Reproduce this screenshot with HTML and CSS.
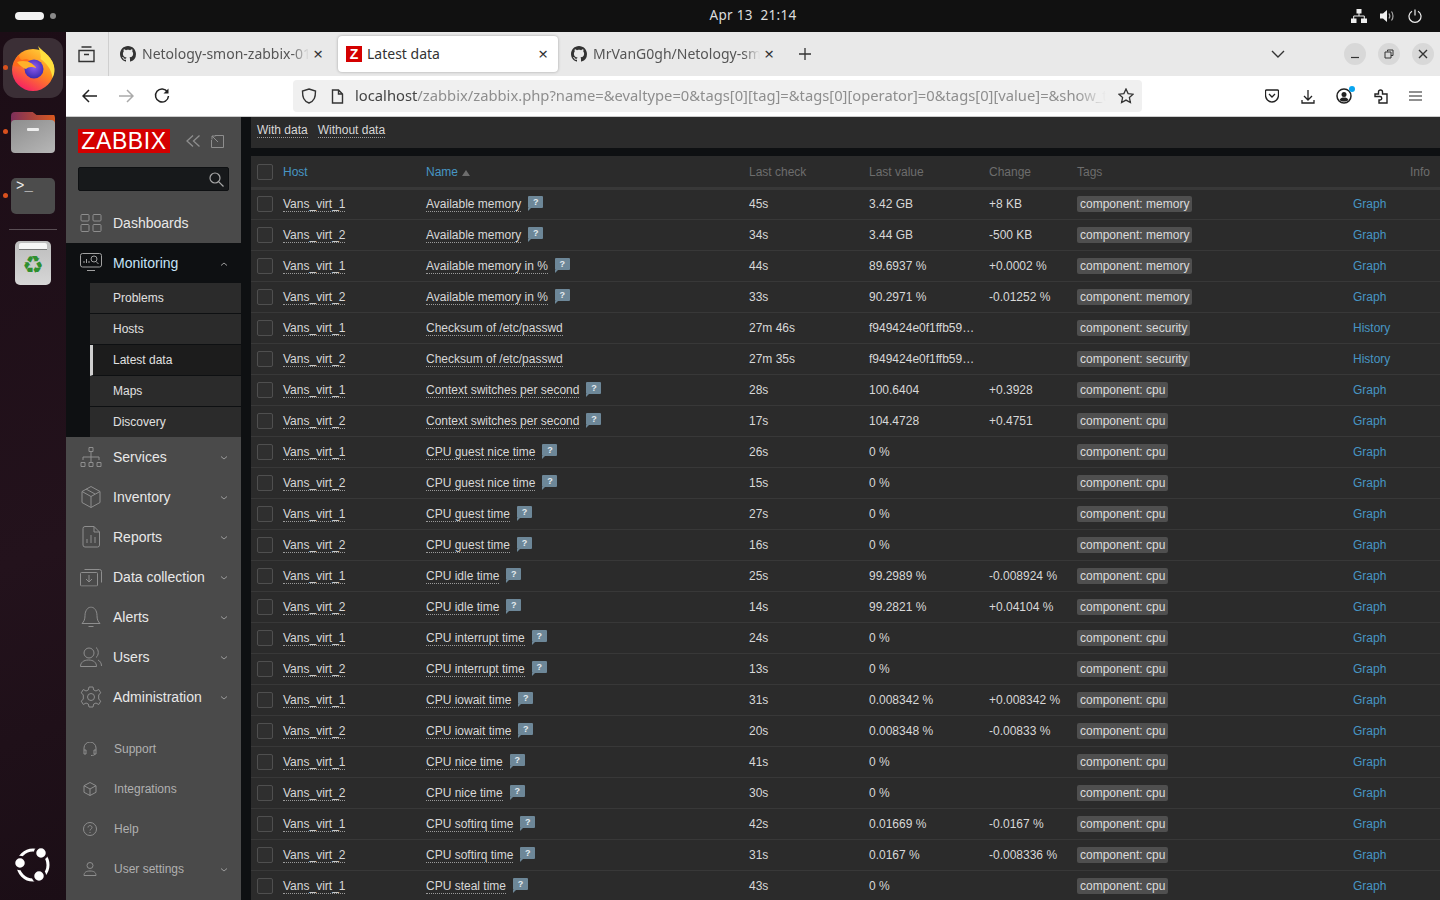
FILE: index.html
```html
<!DOCTYPE html>
<html lang="en">
<head>
  <meta charset="UTF-8">
  <title>Latest data</title>
  <link rel="stylesheet" href="styles.css">
</head>
<body>
  <svg class="defs" width="0" height="0">
    <symbol id="gh" viewBox="0 0 16 16"><path fill="currentColor" d="M8 0C3.58 0 0 3.58 0 8c0 3.54 2.29 6.53 5.47 7.59.4.07.55-.17.55-.38 0-.19-.01-.82-.01-1.49-2.01.37-2.53-.49-2.69-.94-.09-.23-.48-.94-.82-1.13-.28-.15-.68-.52-.01-.53.63-.01 1.08.58 1.23.82.72 1.21 1.87.87 2.33.66.07-.52.28-.87.51-1.07-1.78-.2-3.64-.89-3.64-3.95 0-.87.31-1.59.82-2.15-.08-.2-.36-1.02.08-2.12 0 0 .67-.21 2.2.82.64-.18 1.32-.27 2-.27s1.36.09 2 .27c1.53-1.04 2.2-.82 2.2-.82.44 1.1.16 1.92.08 2.12.51.56.82 1.27.82 2.15 0 3.07-1.87 3.75-3.65 3.95.29.25.54.73.54 1.48 0 1.07-.01 1.93-.01 2.2 0 .21.15.46.55.38A8.01 8.01 0 0 0 16 8c0-4.42-3.58-8-8-8z"/></symbol>
    <symbol id="down" viewBox="0 0 8 6"><path fill="none" stroke="currentColor" d="M1 1.500l3 2.500 3-2.500"/></symbol>
  </svg>

  <header class="topbar">
    <div class="workspaces"><span class="pill"></span><span class="wdot"></span></div>
    <div class="clock">Apr 13&nbsp;&nbsp;21:14</div>
    <div class="tray">
      <svg width="16" height="14" viewBox="0 0 16 14"><path fill="#eee" d="M5.500 0h5v4.500h-5zM0 9.500h5.500V14H0zM10 9.500h6V14h-6z"/><path fill="none" stroke="#eee" d="M8 4v3M2.700 10V7h10.600v3"/></svg>
      <svg width="15" height="14" viewBox="0 0 15 14"><path fill="#eee" d="M0 4.500h3L7 1v12L3 9.500H0z"/><path fill="none" stroke="#aaa" stroke-width="1.200" d="M9 4.500c1 1.500 1 3.500 0 5M11.500 2.500c2 2.500 2 6.500 0 9"/></svg>
      <svg width="14" height="14" viewBox="0 0 14 14"><path fill="none" stroke="#eee" stroke-width="1.200" d="M7 .5v6M4 2.200a6 6 0 1 0 6 0"/></svg>
    </div>
  </header>

  <div class="desktop">
    <nav class="dock">
      <div class="dock-item tile">
        <span class="run-dot"></span>
        <svg width="46" height="46" viewBox="0 0 46 46">
          <defs>
            <linearGradient id="fx" x1="0.800" y1="0" x2="0.200" y2="1"><stop offset="0" stop-color="#ffd43a"/><stop offset=".45" stop-color="#ff8a1e"/><stop offset="1" stop-color="#f5156c"/></linearGradient>
            <radialGradient id="fxb" cx=".5" cy=".4" r=".6"><stop offset="0" stop-color="#8f5cf0"/><stop offset="1" stop-color="#3a2ab0"/></radialGradient>
          </defs>
          <circle cx="23" cy="25" r="21" fill="url(#fx)"/>
          <path fill="#ffdf3e" d="M28 1c5 6 16 12 16.500 23 .2 3-.5 6-2 9-1-9-6-15-12-19 1-4-1-9-2.500-13z"/>
          <path fill="#ff6a1a" d="M3 21c1-5 3-8 6-11 0 3 1 4 3 5 3-1 6-1 9 1l-7 6c-4 0-8-1-11-1z"/>
          <circle cx="24" cy="24" r="9.500" fill="url(#fxb)"/>
          <path fill="#ffb12a" d="M7 17c5-2 11-1 14 1 3 2 6 5 5 5-5-2-8-1-10 1-3-1-7-4-9-7z"/>
        </svg>
      </div>
      <div class="dock-item">
        <span class="run-dot"></span>
        <div class="folder"><span class="folder-back"></span><span class="folder-front"><i></i></span></div>
      </div>
      <div class="dock-item">
        <span class="run-dot"></span>
        <div class="term">&gt;_</div>
      </div>
      <div class="dock-sep"></div>
      <div class="trash"><span class="trash-lid"></span><span class="recycle">♻</span></div>
      <svg class="ubuntu" width="36" height="36" viewBox="0 0 36 36">
        <circle cx="18" cy="18" r="15" fill="none" stroke="#fff" stroke-width="3"/>
        <circle cx="5" cy="16" r="6" fill="#fff" stroke="#1d0f18" stroke-width="2.500"/>
        <circle cx="26" cy="6" r="6" fill="#fff" stroke="#1d0f18" stroke-width="2.500"/>
        <circle cx="24" cy="29" r="6" fill="#fff" stroke="#1d0f18" stroke-width="2.500"/>
      </svg>
    </nav>

    <div class="window">
      <div class="tabstrip">
        <div class="views">
          <svg width="17" height="17" viewBox="0 0 17 17"><path fill="none" stroke="#333" stroke-width="1.400" d="M3.500 1h10M1 4.500h15v11H1zM6 8.500h5"/></svg>
        </div>
        <div class="tab">
          <svg class="fav" width="16" height="16"><use href="#gh"/></svg>
          <span class="tab-title">Netology-smon-zabbix-01</span>
          <span class="tab-x">×</span>
        </div>
        <div class="tab active">
          <span class="zfav">Z</span>
          <span class="tab-title">Latest data</span>
          <span class="tab-x">×</span>
        </div>
        <div class="tab">
          <svg class="fav" width="16" height="16"><use href="#gh"/></svg>
          <span class="tab-title">MrVanG0gh/Netology-sm</span>
          <span class="tab-x">×</span>
        </div>
        <svg class="newtab" width="12" height="12" viewBox="0 0 12 12"><path stroke="#333" stroke-width="1.300" d="M6 0v12M0 6h12"/></svg>
        <svg class="tablist" width="14" height="8" viewBox="0 0 14 8"><path fill="none" stroke="#333" stroke-width="1.400" d="M1 1l6 6 6-6"/></svg>
        <div class="winbtn"><svg width="10" height="10" viewBox="0 0 10 10"><path stroke="#333" stroke-width="1.200" d="M1 8.500h8"/></svg></div>
        <div class="winbtn"><svg width="10" height="10" viewBox="0 0 10 10"><path fill="none" stroke="#333" d="M3.500 2.500V1h5.500v5.500H7M1 3h6v6H1z"/></svg></div>
        <div class="winbtn"><svg width="10" height="10" viewBox="0 0 10 10"><path stroke="#333" stroke-width="1.400" d="M1 1l8 8M9 1l-8 8"/></svg></div>
      </div>

      <div class="toolbar">
        <svg class="tool" width="16" height="14" viewBox="0 0 16 14"><path fill="none" stroke="#222" stroke-width="1.500" d="M15 7H1.500M7 1L1 7l6 6"/></svg>
        <svg class="tool" width="16" height="14" viewBox="0 0 16 14"><path fill="none" stroke="#aaa" stroke-width="1.500" d="M1 7h13.500M9 1l6 6-6 6"/></svg>
        <svg class="tool" width="16" height="16" viewBox="0 0 16 16"><path fill="none" stroke="#222" stroke-width="1.500" d="M13.500 4A6.500 6.500 0 1 0 14.500 8"/><path fill="#222" d="M14.500 .5v5h-5z"/></svg>
        <div class="urlbar">
          <svg width="16" height="16" viewBox="0 0 16 16"><path fill="none" stroke="#333" stroke-width="1.400" d="M8 1l6.500 2c0 6-1 10-6.500 12C2.500 13 1.500 9 1.500 3z"/></svg>
          <svg width="13" height="15" viewBox="0 0 13 15"><path fill="none" stroke="#333" stroke-width="1.400" d="M1.500 1h6l4 4v9h-10zM7.500 1v4h4"/></svg>
          <div class="url"><span class="host">localhost</span>/zabbix/zabbix.php?name=&amp;evaltype=0&amp;tags[0][tag]=&amp;tags[0][operator]=0&amp;tags[0][value]=&amp;show_t</div>
          <svg width="16" height="16" viewBox="0 0 16 16"><path fill="none" stroke="#333" stroke-width="1.300" d="M8 1l2.100 4.600 5 .6-3.700 3.400 1 5L8 12.100 3.600 14.600l1-5L.9 6.200l5-.6z"/></svg>
        </div>
        <div class="tools-right">
          <svg width="14" height="14" viewBox="0 0 14 14"><path fill="none" stroke="#222" stroke-width="1.300" d="M1.500 1h11c.5 0 1 .4 1 1v4c0 4-3 7-6.500 7S.5 10 .5 6V2c0-.6.5-1 1-1zM4 5l3 3 3-3"/></svg>
          <svg width="14" height="15" viewBox="0 0 14 15"><path fill="none" stroke="#222" stroke-width="1.300" d="M7 1v9.500M3 7l4 4 4-4M1 11v3h12v-3"/></svg>
          <div class="account">
            <svg width="16" height="16" viewBox="0 0 16 16"><circle cx="8" cy="8" r="7" fill="none" stroke="#222" stroke-width="1.500"/><circle cx="8" cy="6.500" r="2.500" fill="#222"/><path fill="#222" d="M3.500 12c1-2 2.500-2.500 4.500-2.500s3.500.5 4.500 2.500c-2.500 2-6.500 2-9 0z"/></svg>
            <span class="badge"></span>
          </div>
          <svg width="14" height="15" viewBox="0 0 14 15"><path fill="none" stroke="#222" stroke-width="1.400" d="M1 5h3.500V3a2 2 0 0 1 4 0v2H13v9H5v-3h1a1.700 1.700 0 0 0 0-3.500H1z"/></svg>
          <svg width="13" height="10" viewBox="0 0 13 10"><path stroke="#222" stroke-width="1.200" d="M0 1h13M0 5h13M0 9h13"/></svg>
        </div>
      </div>

      <div class="page">
        <aside class="sidebar">
          <div class="brand">
            <div class="logo">ZABBIX</div>
            <svg width="14" height="12" viewBox="0 0 14 12"><path fill="none" stroke="#8e8e8e" stroke-width="1.300" d="M7 .5L1 6l6 5.500M13.500 .5L7.500 6l6 5.500"/></svg>
            <svg width="13" height="13" viewBox="0 0 13 13"><path fill="none" stroke="#8e8e8e" d="M4 .5h8.500v12H.5V5M1 1l6 6M1 4.500V1h3.500"/></svg>
          </div>
          <div class="search">
            <svg width="15" height="15" viewBox="0 0 15 15"><circle cx="6" cy="6" r="5" fill="none" stroke="#a8a8a8" stroke-width="1.200"/><path stroke="#a8a8a8" stroke-width="1.200" d="M9.800 9.800L14.500 14.500"/></svg>
          </div>
          <a class="menu">
            <svg class="mi" width="22" height="20" viewBox="0 0 22 20"><path fill="none" stroke="#8e8e8e" d="M2 1.500h6a1 1 0 0 1 1 1v4.500a1 1 0 0 1-1 1H2a1 1 0 0 1-1-1V2.500a1 1 0 0 1 1-1zM14 1.500h6a1 1 0 0 1 1 1v4.500a1 1 0 0 1-1 1h-6a1 1 0 0 1-1-1V2.500a1 1 0 0 1 1-1zM2 11.500h6a1 1 0 0 1 1 1v5a1 1 0 0 1-1 1H2a1 1 0 0 1-1-1v-5a1 1 0 0 1 1-1zM14 11.500h6a1 1 0 0 1 1 1v5a1 1 0 0 1-1 1h-6a1 1 0 0 1-1-1v-5a1 1 0 0 1 1-1z"/></svg>
            <span>Dashboards</span>
          </a>
          <a class="menu open">
            <svg class="mi" width="22" height="20" viewBox="0 0 22 20"><path fill="none" stroke="#a0a0a0" d="M2.500 .5h17a2 2 0 0 1 2 2V12a2 2 0 0 1-2 2h-17a2 2 0 0 1-2-2V2.500a2 2 0 0 1 2-2zM7 17.500h8M4 10V8M6.500 10V6M9 10V8"/><circle cx="14" cy="6" r="3" fill="none" stroke="#a0a0a0"/><path stroke="#a0a0a0" d="M16 8.500l2.500 2.500"/></svg>
            <span>Monitoring</span>
            <svg class="chev up" width="8" height="6"><use href="#down"/></svg>
          </a>
          <div class="submenu">
            <a>Problems</a>
            <a>Hosts</a>
            <a class="current">Latest data</a>
            <a>Maps</a>
            <a>Discovery</a>
          </div>
          <a class="menu">
            <svg class="mi" width="22" height="20" viewBox="0 0 22 20"><path fill="none" stroke="#8e8e8e" d="M9 .5h4v4H9zM1 15.500h4v4H1zM9 15.500h4v4H9zM17 15.500h4v4h-4zM11 4.500V15M3 13v-3h16v3"/></svg>
            <span>Services</span>
            <svg class="chev" width="8" height="6"><use href="#down"/></svg>
          </a>
          <a class="menu">
            <svg class="mi" width="20" height="22" viewBox="0 0 20 22"><path fill="none" stroke="#8e8e8e" d="M10 .5l9 5v11l-9 5-9-5v-11zM1 5.500l9 5 9-5M10 10.500v11M5 3l9 5"/></svg>
            <span>Inventory</span>
            <svg class="chev" width="8" height="6"><use href="#down"/></svg>
          </a>
          <a class="menu">
            <svg class="mi" width="18" height="22" viewBox="0 0 18 22"><path fill="none" stroke="#8e8e8e" d="M3 .5h9l5.500 5.500V19a2 2 0 0 1-2 2H3a2 2 0 0 1-2-2V2.500a2 2 0 0 1 2-2zM12 .5V6h5.500M5 17v-4M9 17V9M13 17v-6"/></svg>
            <span>Reports</span>
            <svg class="chev" width="8" height="6"><use href="#down"/></svg>
          </a>
          <a class="menu">
            <svg class="mi" width="22" height="19" viewBox="0 0 22 19"><path fill="none" stroke="#8e8e8e" d="M1.500 5h15a1 1 0 0 1 1 1v11.500a1 1 0 0 1-1 1h-15a1 1 0 0 1-1-1V6a1 1 0 0 1 1-1zM4.500 2h15a2 2 0 0 1 2 2v11M9 7.500v7M6 11.500l3 3 3-3"/></svg>
            <span>Data collection</span>
            <svg class="chev" width="8" height="6"><use href="#down"/></svg>
          </a>
          <a class="menu">
            <svg class="mi" width="20" height="21" viewBox="0 0 20 21"><path fill="none" stroke="#8e8e8e" d="M1 17h18c-2-2-3-4-3-8 0-5-3-8.500-6-8.500S4 4 4 9c0 4-1 6-3 8zM7.500 20h5"/></svg>
            <span>Alerts</span>
            <svg class="chev" width="8" height="6"><use href="#down"/></svg>
          </a>
          <a class="menu">
            <svg class="mi" width="22" height="20" viewBox="0 0 22 20"><circle cx="9" cy="6" r="5" fill="none" stroke="#8e8e8e"/><path fill="none" stroke="#8e8e8e" d="M.5 19.500c0-4 3-6.500 8-6.500s8 2.500 8 6.500zM16 .5c3 2 3 8 0 10M18 13c2 1 3.500 3 3.500 6"/></svg>
            <span>Users</span>
            <svg class="chev" width="8" height="6"><use href="#down"/></svg>
          </a>
          <a class="menu">
            <svg class="mi" width="22" height="22" viewBox="0 0 22 22"><circle cx="11" cy="11" r="3.500" fill="none" stroke="#8e8e8e"/><path fill="none" stroke="#8e8e8e" d="M9 1h4l.7 3 2.300 1 2.700-1.500 2 3.300-2 2.200v4l2 2.200-2 3.300L16 17l-2.300 1-.7 3H9l-.7-3L6 17l-2.700 1.500-2-3.300 2-2.200v-4l-2-2.200 2-3.300L6 5l2.300-1z"/></svg>
            <span>Administration</span>
            <svg class="chev" width="8" height="6"><use href="#down"/></svg>
          </a>
          <div class="user-menu">
            <a class="menu small">
              <svg class="mi" width="14" height="14" viewBox="0 0 14 14"><path fill="none" stroke="#8e8e8e" d="M1 8V6a6 6 0 0 1 12 0v2M1 8h2v4H1zM13 8h-2v4h2zM12 12c0 1-2 1.500-4 1.500"/></svg>
              <span>Support</span>
            </a>
            <a class="menu small">
              <svg class="mi" width="14" height="14" viewBox="0 0 14 14"><path fill="none" stroke="#8e8e8e" d="M7 .5l6 3.200v6.600l-6 3.200-6-3.200V3.700zM1 3.700l6 3.300 6-3.300M7 7v6.500"/></svg>
              <span>Integrations</span>
            </a>
            <a class="menu small">
              <svg class="mi" width="14" height="14" viewBox="0 0 14 14"><circle cx="7" cy="7" r="6.500" fill="none" stroke="#8e8e8e"/><path fill="none" stroke="#8e8e8e" d="M5 5.500C5 3 9 3 9 5.500 9 7 7 7 7 8.500M7 10v1"/></svg>
              <span>Help</span>
            </a>
            <a class="menu small">
              <svg class="mi" width="14" height="14" viewBox="0 0 14 14"><circle cx="7" cy="3.500" r="3" fill="none" stroke="#8e8e8e"/><path fill="none" stroke="#8e8e8e" d="M1 13.500c0-3 2-4.500 6-4.500s6 1.500 6 4.500z"/></svg>
              <span>User settings</span>
              <svg class="chev" width="8" height="6"><use href="#down"/></svg>
            </a>
          </div>
        </aside>

        <main class="content">
          <div class="filter-tabs"><a>With data</a><a>Without data</a></div>
          <table class="latest">
            <colgroup>
              <col class="c-check"><col class="c-host"><col class="c-name"><col class="c-time"><col class="c-value"><col class="c-change"><col class="c-tags"><col class="c-graph"><col class="c-info">
            </colgroup>
            <thead>
              <tr><th><span class="cb"></span></th><th class="sortable">Host</th><th class="sortable">Name <i class="sort-up"></i></th><th>Last check</th><th>Last value</th><th>Change</th><th>Tags</th><th></th><th class="info">Info</th></tr>
            </thead>
            <tbody>
              <tr><td><span class="cb"></span></td><td><a class="host-link">Vans_virt_1</a></td><td><a class="item">Available memory</a><span class="hint">?</span></td><td>45s</td><td>3.42 GB</td><td>+8 KB</td><td><span class="tag">component: memory</span></td><td><a class="act">Graph</a></td><td></td></tr>
              <tr><td><span class="cb"></span></td><td><a class="host-link">Vans_virt_2</a></td><td><a class="item">Available memory</a><span class="hint">?</span></td><td>34s</td><td>3.44 GB</td><td>-500 KB</td><td><span class="tag">component: memory</span></td><td><a class="act">Graph</a></td><td></td></tr>
              <tr><td><span class="cb"></span></td><td><a class="host-link">Vans_virt_1</a></td><td><a class="item">Available memory in %</a><span class="hint">?</span></td><td>44s</td><td>89.6937 %</td><td>+0.0002 %</td><td><span class="tag">component: memory</span></td><td><a class="act">Graph</a></td><td></td></tr>
              <tr><td><span class="cb"></span></td><td><a class="host-link">Vans_virt_2</a></td><td><a class="item">Available memory in %</a><span class="hint">?</span></td><td>33s</td><td>90.2971 %</td><td>-0.01252 %</td><td><span class="tag">component: memory</span></td><td><a class="act">Graph</a></td><td></td></tr>
              <tr><td><span class="cb"></span></td><td><a class="host-link">Vans_virt_1</a></td><td><a class="item">Checksum of /etc/passwd</a></td><td>27m 46s</td><td>f949424e0f1ffb59…</td><td></td><td><span class="tag">component: security</span></td><td><a class="act">History</a></td><td></td></tr>
              <tr><td><span class="cb"></span></td><td><a class="host-link">Vans_virt_2</a></td><td><a class="item">Checksum of /etc/passwd</a></td><td>27m 35s</td><td>f949424e0f1ffb59…</td><td></td><td><span class="tag">component: security</span></td><td><a class="act">History</a></td><td></td></tr>
              <tr><td><span class="cb"></span></td><td><a class="host-link">Vans_virt_1</a></td><td><a class="item">Context switches per second</a><span class="hint">?</span></td><td>28s</td><td>100.6404</td><td>+0.3928</td><td><span class="tag">component: cpu</span></td><td><a class="act">Graph</a></td><td></td></tr>
              <tr><td><span class="cb"></span></td><td><a class="host-link">Vans_virt_2</a></td><td><a class="item">Context switches per second</a><span class="hint">?</span></td><td>17s</td><td>104.4728</td><td>+0.4751</td><td><span class="tag">component: cpu</span></td><td><a class="act">Graph</a></td><td></td></tr>
              <tr><td><span class="cb"></span></td><td><a class="host-link">Vans_virt_1</a></td><td><a class="item">CPU guest nice time</a><span class="hint">?</span></td><td>26s</td><td>0 %</td><td></td><td><span class="tag">component: cpu</span></td><td><a class="act">Graph</a></td><td></td></tr>
              <tr><td><span class="cb"></span></td><td><a class="host-link">Vans_virt_2</a></td><td><a class="item">CPU guest nice time</a><span class="hint">?</span></td><td>15s</td><td>0 %</td><td></td><td><span class="tag">component: cpu</span></td><td><a class="act">Graph</a></td><td></td></tr>
              <tr><td><span class="cb"></span></td><td><a class="host-link">Vans_virt_1</a></td><td><a class="item">CPU guest time</a><span class="hint">?</span></td><td>27s</td><td>0 %</td><td></td><td><span class="tag">component: cpu</span></td><td><a class="act">Graph</a></td><td></td></tr>
              <tr><td><span class="cb"></span></td><td><a class="host-link">Vans_virt_2</a></td><td><a class="item">CPU guest time</a><span class="hint">?</span></td><td>16s</td><td>0 %</td><td></td><td><span class="tag">component: cpu</span></td><td><a class="act">Graph</a></td><td></td></tr>
              <tr><td><span class="cb"></span></td><td><a class="host-link">Vans_virt_1</a></td><td><a class="item">CPU idle time</a><span class="hint">?</span></td><td>25s</td><td>99.2989 %</td><td>-0.008924 %</td><td><span class="tag">component: cpu</span></td><td><a class="act">Graph</a></td><td></td></tr>
              <tr><td><span class="cb"></span></td><td><a class="host-link">Vans_virt_2</a></td><td><a class="item">CPU idle time</a><span class="hint">?</span></td><td>14s</td><td>99.2821 %</td><td>+0.04104 %</td><td><span class="tag">component: cpu</span></td><td><a class="act">Graph</a></td><td></td></tr>
              <tr><td><span class="cb"></span></td><td><a class="host-link">Vans_virt_1</a></td><td><a class="item">CPU interrupt time</a><span class="hint">?</span></td><td>24s</td><td>0 %</td><td></td><td><span class="tag">component: cpu</span></td><td><a class="act">Graph</a></td><td></td></tr>
              <tr><td><span class="cb"></span></td><td><a class="host-link">Vans_virt_2</a></td><td><a class="item">CPU interrupt time</a><span class="hint">?</span></td><td>13s</td><td>0 %</td><td></td><td><span class="tag">component: cpu</span></td><td><a class="act">Graph</a></td><td></td></tr>
              <tr><td><span class="cb"></span></td><td><a class="host-link">Vans_virt_1</a></td><td><a class="item">CPU iowait time</a><span class="hint">?</span></td><td>31s</td><td>0.008342 %</td><td>+0.008342 %</td><td><span class="tag">component: cpu</span></td><td><a class="act">Graph</a></td><td></td></tr>
              <tr><td><span class="cb"></span></td><td><a class="host-link">Vans_virt_2</a></td><td><a class="item">CPU iowait time</a><span class="hint">?</span></td><td>20s</td><td>0.008348 %</td><td>-0.00833 %</td><td><span class="tag">component: cpu</span></td><td><a class="act">Graph</a></td><td></td></tr>
              <tr><td><span class="cb"></span></td><td><a class="host-link">Vans_virt_1</a></td><td><a class="item">CPU nice time</a><span class="hint">?</span></td><td>41s</td><td>0 %</td><td></td><td><span class="tag">component: cpu</span></td><td><a class="act">Graph</a></td><td></td></tr>
              <tr><td><span class="cb"></span></td><td><a class="host-link">Vans_virt_2</a></td><td><a class="item">CPU nice time</a><span class="hint">?</span></td><td>30s</td><td>0 %</td><td></td><td><span class="tag">component: cpu</span></td><td><a class="act">Graph</a></td><td></td></tr>
              <tr><td><span class="cb"></span></td><td><a class="host-link">Vans_virt_1</a></td><td><a class="item">CPU softirq time</a><span class="hint">?</span></td><td>42s</td><td>0.01669 %</td><td>-0.0167 %</td><td><span class="tag">component: cpu</span></td><td><a class="act">Graph</a></td><td></td></tr>
              <tr><td><span class="cb"></span></td><td><a class="host-link">Vans_virt_2</a></td><td><a class="item">CPU softirq time</a><span class="hint">?</span></td><td>31s</td><td>0.0167 %</td><td>-0.008336 %</td><td><span class="tag">component: cpu</span></td><td><a class="act">Graph</a></td><td></td></tr>
              <tr><td><span class="cb"></span></td><td><a class="host-link">Vans_virt_1</a></td><td><a class="item">CPU steal time</a><span class="hint">?</span></td><td>43s</td><td>0 %</td><td></td><td><span class="tag">component: cpu</span></td><td><a class="act">Graph</a></td><td></td></tr>
            </tbody>
          </table>
        </main>
      </div>
    </div>
  </div>
</body>
</html>
```

FILE: styles.css
```css
* {
  box-sizing: border-box;
}

html, body {
  margin: 0;
  height: 100%;
  overflow: hidden;
}

body {
  display: flex;
  flex-direction: column;
  font-family: "Liberation Sans", Arial, sans-serif;
  background-color: #111;
}

.defs {
  position: absolute;
}

/* gnome top bar */
.topbar {
  height: 32px;
  flex: none;
  display: grid;
  grid-template-columns: 1fr auto 1fr;
  align-items: center;
  padding-bottom: 2px;
  background-color: #111;
  color: #ddd;
}

.workspaces {
  display: flex;
  align-items: center;
  gap: 6px;
  padding: 2px 0 0 15px;
}

.pill {
  width: 29px;
  height: 8px;
  border-radius: 4px;
  background-color: #f2f2f2;
}

.wdot {
  width: 6px;
  height: 6px;
  border-radius: 50%;
  background-color: #8a8a8a;
}

.clock {
  font-family: "Noto Sans", sans-serif;
  font-size: 13.5px;
  letter-spacing: 0.3px;
  transform: translateX(33px);
}

.tray {
  display: flex;
  justify-content: flex-end;
  align-items: center;
  gap: 13px;
  padding: 2px 18px 0 0;
}

.desktop {
  flex: 1;
  display: flex;
  min-height: 0;
}

/* ubuntu dock */
.dock {
  width: 66px;
  flex: none;
  display: flex;
  flex-direction: column;
  align-items: center;
  padding-top: 6px;
  background: linear-gradient(160deg, #1c0d16 0%, #23121c 60%, #1b0e16 100%);
}

.dock-item {
  position: relative;
  width: 60px;
  height: 60px;
  display: flex;
  align-items: center;
  justify-content: center;
  margin-bottom: 4px;
}

.tile {
  background-color: #3b2f36;
  border-radius: 13px;
}

.run-dot {
  position: absolute;
  left: 0;
  top: 27px;
  width: 5px;
  height: 5px;
  border-radius: 50%;
  background-color: #d9511e;
}

.folder {
  position: relative;
  width: 44px;
  height: 41px;
}

.folder-back {
  position: absolute;
  inset: 0 0 12px 0;
  border-radius: 4px 6px 0 0;
  background: linear-gradient(90deg, #7c2f5a, #d9591f);
  clip-path: polygon(0 0, 48% 0, 58% 12%, 100% 12%, 100% 100%, 0 100%);
}

.folder-front {
  position: absolute;
  inset: 8px 0 0 0;
  display: flex;
  justify-content: center;
  border-radius: 4px;
  background: linear-gradient(150deg, #8d8d8d, #b7b7b7);
}

.folder-front i {
  width: 12px;
  height: 3px;
  margin-top: 8px;
  border-radius: 1px;
  background-color: #eee;
}

.term {
  width: 44px;
  height: 36px;
  padding: 0 0 0 5px;
  border-radius: 5px;
  background-color: #4c4c4c;
  color: #f0f0f0;
  font-family: "Liberation Mono", monospace;
  font-size: 14px;
  line-height: 17px;
}

.dock-sep {
  width: 48px;
  height: 1px;
  flex: none;
  margin: -1px 0 11px;
  background-color: #5a4f55;
}

.trash {
  width: 36px;
  height: 44px;
  display: flex;
  flex-direction: column;
  align-items: center;
  padding-top: 2px;
  border-radius: 5px;
  background: linear-gradient(180deg, #bdbdbd, #d6d6d6);
}

.trash-lid {
  width: 28px;
  height: 7px;
  border-radius: 2px 2px 0 0;
  background-color: #f6f6f6;
  border-bottom: 1px solid #777;
}

.recycle {
  font-family: "DejaVu Sans", sans-serif;
  font-size: 24px;
  line-height: 30px;
  color: #2f8f2f;
}

.ubuntu {
  margin-top: auto;
  margin-bottom: 17px;
}

/* firefox chrome */
.window {
  flex: 1;
  min-width: 0;
  display: flex;
  flex-direction: column;
}

.tabstrip {
  height: 44px;
  flex: none;
  display: flex;
  align-items: center;
  background-color: #e9e9e9;
  font-family: "Noto Sans", sans-serif;
  font-size: 14px;
  color: #555;
}

.views {
  width: 43px;
  height: 100%;
  flex: none;
  display: flex;
  align-items: center;
  padding-left: 12px;
  border-right: 1px solid #cfcfcf;
}

.tab {
  width: 213px;
  height: 36px;
  flex: none;
  display: flex;
  align-items: center;
  margin-left: 3px;
  padding: 0 0 0 8px;
}

.tab.active {
  width: 220px;
  margin-left: 13px;
  margin-right: 2px;
  padding-right: 8px;
  background-color: #fff;
  border-radius: 4px;
  box-shadow: 0 0 3px rgba(0, 0, 0, 0.3);
  color: #333;
}

.fav {
  flex: none;
  color: #333;
}

.zfav {
  width: 16px;
  height: 16px;
  flex: none;
  background-color: #d40000;
  color: #fff;
  font-family: "Liberation Sans", sans-serif;
  font-weight: bold;
  font-size: 14px;
  line-height: 16px;
  text-align: center;
}

.tab-title {
  flex: 1;
  min-width: 0;
  margin: -2px 0 0 6px;
  white-space: nowrap;
  -webkit-mask-image: linear-gradient(90deg, #000 90%, transparent);
  mask-image: linear-gradient(90deg, #000 90%, transparent);
}

.tab.active .tab-title {
  margin-left: 5px;
  -webkit-mask-image: none;
  mask-image: none;
}

.tab-x {
  flex: none;
  margin-left: 2px;
  width: 14px;
  text-align: center;
  font-size: 17px;
  line-height: 16px;
  color: #333;
}

.newtab {
  flex: none;
  margin-left: 23px;
}

.tablist {
  flex: none;
  margin-left: auto;
  margin-right: 59px;
}

.winbtn {
  width: 22px;
  height: 22px;
  flex: none;
  display: flex;
  align-items: center;
  justify-content: center;
  margin-right: 12px;
  border-radius: 50%;
  background-color: #d8d8d8;
}

.winbtn:last-child {
  margin-right: 6px;
}

.toolbar {
  height: 41px;
  flex: none;
  display: flex;
  align-items: center;
  padding-left: 16px;
  background-color: #fff;
  border-bottom: 1px solid #ccc;
}

.tool {
  flex: none;
  margin-right: 20px;
}

.urlbar {
  width: 849px;
  height: 32px;
  flex: none;
  display: flex;
  align-items: center;
  gap: 12px;
  margin-left: 103px;
  padding: 0 8px;
  border-radius: 4px;
  background-color: #f0f0f0;
}

.urlbar svg {
  flex: none;
}

.urlbar svg:nth-child(2) {
  margin: 0 -1px 0 2px;
}

.url {
  flex: 1;
  min-width: 0;
  margin-top: -2px;
  font-family: "Noto Sans", sans-serif;
  font-size: 14.75px;
  color: #8e8e8e;
  white-space: nowrap;
  -webkit-mask-image: linear-gradient(90deg, #000 96%, transparent);
  mask-image: linear-gradient(90deg, #000 96%, transparent);
}

.url .host {
  color: #444;
}

.tools-right {
  flex: 1;
  display: flex;
  align-items: center;
  justify-content: space-between;
  padding: 0 18px 0 123px;
}

.account {
  position: relative;
  display: flex;
}

.badge {
  position: absolute;
  top: -2px;
  right: -3px;
  width: 6px;
  height: 6px;
  border-radius: 50%;
  background-color: #0aa5ef;
}

/* zabbix */
.page {
  flex: 1;
  min-height: 0;
  display: flex;
  background-color: #0e1012;
}

.sidebar {
  width: 175px;
  flex: none;
  display: flex;
  flex-direction: column;
  background-color: #4a4a4a;
  color: #f2f2f2;
}

.brand {
  display: flex;
  align-items: center;
  height: 24px;
  margin: 12px 0 0 12px;
}

.logo {
  width: 92px;
  height: 24px;
  margin-right: 16px;
  background-color: #d40000;
  color: #fff;
  font-size: 23px;
  line-height: 24px;
  text-align: center;
  letter-spacing: 0.6px;
}

.brand svg:last-child {
  margin-left: 11px;
}

.search {
  display: flex;
  align-items: center;
  justify-content: flex-end;
  width: 151px;
  height: 24px;
  margin: 14px 0 12px 12px;
  padding-right: 4px;
  background-color: #17191b;
  border: 1px solid #0e1012;
  border-radius: 2px;
}

.menu {
  position: relative;
  height: 40px;
  flex: none;
  display: flex;
  align-items: center;
  padding-left: 47px;
  font-size: 14px;
  color: #e8e8e8;
}

.menu .mi {
  position: absolute;
  left: 25px;
  top: 50%;
  transform: translate(-50%, -50%);
}

.menu.open {
  background-color: #0e1012;
  color: #c5e3f8;
}

.chev {
  position: absolute;
  right: 13px;
  top: 18px;
  color: #9a9a9a;
}

.chev.up {
  transform: rotate(180deg);
}

.submenu {
  display: flex;
  flex-direction: column;
  padding-left: 24px;
  background-color: #0e1012;
}

.submenu a {
  height: 31px;
  display: flex;
  align-items: center;
  padding-left: 23px;
  font-size: 12px;
  color: #e0e0e0;
  background-color: #2b2b2b;
  border-bottom: 1px solid #0e1012;
}

.submenu a:last-child {
  height: 30px;
  border-bottom: 0;
}

.submenu a.current {
  padding-left: 20px;
  background-color: #1c1c1c;
  border-left: 3px solid #cfcfcf;
}

.user-menu {
  margin-top: 12px;
}

.menu.small {
  font-size: 12px;
  padding-left: 48px;
  color: #b0b0b0;
}

.menu.small .mi {
  left: 24px;
}

.content {
  flex: 1;
  min-width: 0;
  margin-left: 10px;
  overflow: hidden;
}

.filter-tabs {
  height: 31px;
  display: flex;
  align-items: flex-start;
  gap: 10px;
  padding: 6px 0 0 6px;
  margin-bottom: 8px;
  background-color: #2b2b2b;
  font-size: 12px;
  color: #d8d8d8;
}

.filter-tabs a {
  border-bottom: 1px dotted #9a9a9a;
  line-height: 14px;
}

.latest {
  width: 100%;
  table-layout: fixed;
  border-collapse: collapse;
  font-size: 12px;
  background-color: #2b2b2b;
  color: #d8d8d8;
}

.c-check { width: 32px; }
.c-host { width: 143px; }
.c-name { width: 323px; }
.c-time { width: 120px; }
.c-value { width: 120px; }
.c-change { width: 88px; }
.c-tags { width: 276px; }
.c-graph { width: 57px; }

.latest th {
  height: 32px;
  padding: 2px 0 0;
  text-align: left;
  font-weight: normal;
  color: #6d6d6d;
  border-bottom: 3px solid #383838;
}

.latest th.sortable {
  color: #4796c4;
}

.latest th.info {
  padding-right: 10px;
  text-align: right;
}

.latest td {
  height: 31px;
  padding: 0;
  white-space: nowrap;
  border-bottom: 1px solid #383838;
}

.cb {
  display: block;
  width: 16px;
  height: 16px;
  margin-left: 6px;
  background-color: #2f2f2f;
  border: 1px solid #4f4f4f;
  border-radius: 2px;
}

.sort-up {
  display: inline-block;
  margin-left: 1px;
  border-left: 4px solid transparent;
  border-right: 4px solid transparent;
  border-bottom: 6px solid #6d6d6d;
}

.host-link,
.item {
  border-bottom: 1px dotted #9a9a9a;
}

.hint {
  position: relative;
  top: -3px;
  display: inline-block;
  width: 15px;
  height: 12px;
  margin-left: 7px;
  background-color: #6d8798;
  border-radius: 1px;
  color: #e4ebef;
  font-size: 9px;
  font-weight: bold;
  line-height: 12px;
  text-align: center;
}

.hint::after {
  content: "";
  position: absolute;
  left: 0;
  bottom: -3px;
  border-top: 3px solid #6d8798;
  border-right: 3px solid transparent;
}

.tag {
  display: inline-block;
  height: 16px;
  padding: 0 3px;
  background-color: #4f4f4f;
  border-radius: 2px;
  color: #dcdcdc;
  line-height: 16px;
}

.act {
  color: #4796c4;
}
```
